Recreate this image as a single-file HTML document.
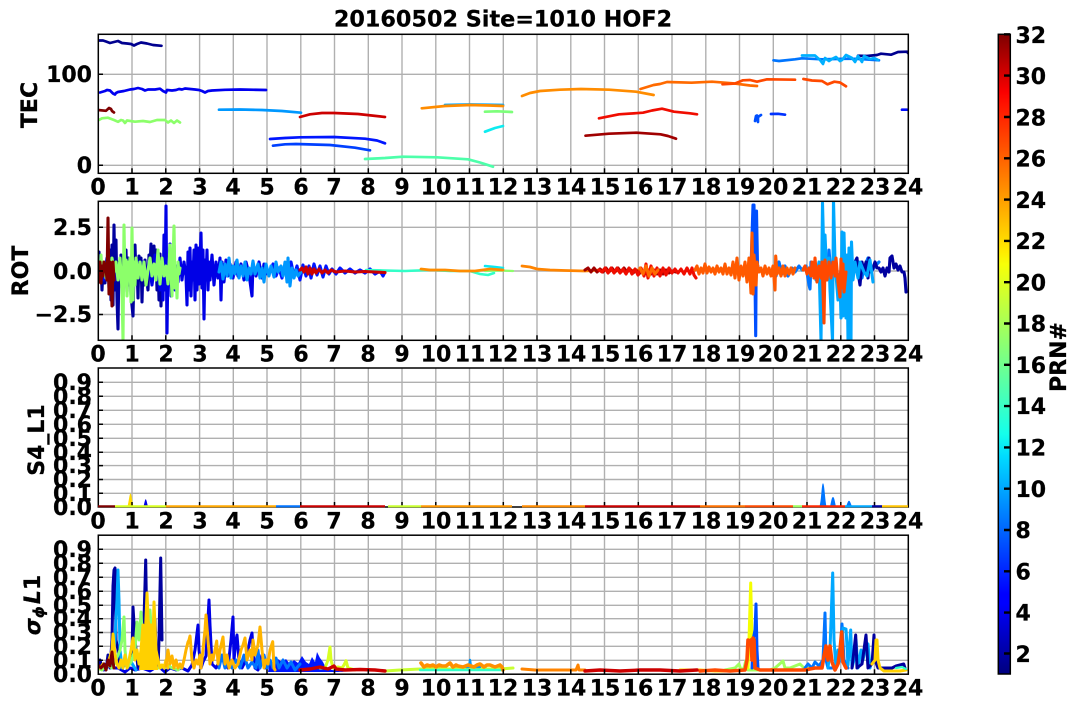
<!DOCTYPE html>
<html><head><meta charset="utf-8"><style>
html,body{margin:0;padding:0;background:#fff}
svg{display:block}
text{font-family:"DejaVu Sans","Liberation Sans",sans-serif;font-weight:bold;fill:#000;stroke:#000;stroke-width:.25px}
.x text{font-size:22px;text-anchor:middle}
.y text{font-size:22px;text-anchor:end}
.l{fill:none;stroke-linejoin:round;stroke-linecap:round}
#p1 polyline{stroke-width:2.7px}
#p2 polyline{stroke-width:3.1px}
#p4 polyline{stroke-width:3px}
</style></head><body>
<svg width="1077" height="709" viewBox="0 0 1077 709" xmlns="http://www.w3.org/2000/svg">
<defs>
<filter id="b" x="-2%" y="-5%" width="104%" height="110%"><feGaussianBlur stdDeviation=".3"/></filter>
<linearGradient id="jet" x1="0" y1="1" x2="0" y2="0">
<stop offset="0" stop-color="#00007f"/><stop offset=".11" stop-color="#0000ff"/><stop offset=".125" stop-color="#0000ff"/><stop offset=".34" stop-color="#00dbff"/><stop offset=".375" stop-color="#14ffeb"/><stop offset=".64" stop-color="#f7ff08"/><stop offset=".66" stop-color="#ffeb00"/><stop offset=".89" stop-color="#ff1300"/><stop offset=".91" stop-color="#fa0000"/><stop offset="1" stop-color="#7f0000"/>
</linearGradient>
<clipPath id="c1"><rect x="98" y="34" width="810" height="139.5"/></clipPath>
<clipPath id="c2"><rect x="98" y="201" width="810" height="139.5"/></clipPath>
<clipPath id="c3"><rect x="98" y="368" width="810" height="139"/></clipPath>
<clipPath id="c4"><rect x="98" y="535" width="810" height="139.5"/></clipPath>
<path id="gv" d="M132 0V139M165.8 0V139M199.6 0V139M233.3 0V139M267 0V139M300.8 0V139M334.5 0V139M368.3 0V139M402 0V139M435.8 0V139M469.5 0V139M503.3 0V139M537 0V139M570.8 0V139M604.5 0V139M638.3 0V139M672 0V139M705.8 0V139M739.5 0V139M773.3 0V139M807 0V139M840.8 0V139M874.5 0V139" fill="none" stroke="#b0b0b0" stroke-width="1.4"/>
<path id="tx" d="M132 139v-5M165.8 139v-5M199.6 139v-5M233.3 139v-5M267 139v-5M300.8 139v-5M334.5 139v-5M368.3 139v-5M402 139v-5M435.8 139v-5M469.5 139v-5M503.3 139v-5M537 139v-5M570.8 139v-5M604.5 139v-5M638.3 139v-5M672 139v-5M705.8 139v-5M739.5 139v-5M773.3 139v-5M807 139v-5M840.8 139v-5M874.5 139v-5" fill="none" stroke="#000" stroke-width="1.5"/>
</defs>
<rect width="1077" height="709" fill="#fff"/>
<text x="503" y="26.5" font-size="22.3" text-anchor="middle">20160502 Site=1010 HOF2</text>

<!-- grids -->
<use href="#gv" y="34.3"/><use href="#gv" y="201.3"/><use href="#gv" y="368"/><use href="#gv" y="535.2"/>
<path fill="none" stroke="#b0b0b0" stroke-width="1.4" d="M98 74.3H908M98 165.3H908M98 227.3H908M98 271H908M98 314.5H908
M98 382.3H908M98 396.3H908M98 410.3H908M98 424.3H908M98 438.3H908M98 452.3H908M98 465.6H908M98 479.5H908M98 493.3H908
M98 549.3H908M98 563.3H908M98 577.3H908M98 591.3H908M98 605.3H908M98 618.7H908M98 632.5H908M98 646.3H908M98 660.3H908"/>

<!-- panel 1 TEC -->
<g id="p1" clip-path="url(#c1)" filter="url(#b)">
<polyline class="l" stroke="#00008f" points="98,40.5 103,40.5 106,41.5 110,43 114,42 118,41 122,43 127,43.5 131,44 134,45.5 137,44 141,42.5 147,43.5 153,45 161.5,45.8"/>
<polyline class="l" stroke="#0000f0" points="100,92.5 105,91 107,90 110,90.5 113,93.5 115,94.5 116,93 118,92 124,91 130,89.5 134,89 138,88 142,89 145,90.5 148,89.5 155,89.5 160,88.7 163,91 166,92.5 167,90 172,90.5 176,90 179,89 182,89.5 185,88.5 190,89 195,89.5 199,90 202,91 205,92.5 208,91 212,90.5 225,89.8 240,89.5 266,90"/>
<polyline class="l" stroke="#0014ff" points="270,139 285,138 300,137.3 334,137 365,138.7 377,140.5 385,143.3"/>
<polyline class="l" stroke="#0040ff" points="273,145.7 285,144.3 296,144 330,145 355,147.7 370,150.3"/>
<polyline class="l" stroke="#0050ff" points="757,115.5 755,121 756,116 758,122 758,117 761,115"/>
<polyline class="l" stroke="#0030ff" points="771,114 778,113.8 785,114.7"/>
<polyline class="l" stroke="#0008ff" points="902,109.7 907,109.7"/>
<polyline class="l" stroke="#00008f" points="858,55.7 867,56 877,55 881,53.7 891,54.7 898,52 907,51.7 908,53"/>
<polyline class="l" stroke="#0074ff" points="773.5,60.3 779,61 795,59.3 802,58.3 822,59.3 835,59 850,58.7 860,59 879,60.3"/>
<polyline class="l" stroke="#0098ff" points="219,109.7 240,109.5 262,110 282,111 301,112.7"/>
<polyline class="l" stroke="#00a8ff" points="445,105 470,104.5 503,105"/>
<polyline class="l" stroke="#00b0ff" points="802,55.5 815,55.5 820,60 823,64 825,58 829,61 832,59 836,57 840,61 842,60 846,55 852,58 855,62 858,56 862,62 864,56 870,59 874,58 878,60"/>
<polyline class="l" stroke="#10ecf0" points="485,131.7 495,128 503,126"/>
<polyline class="l" stroke="#4dffaa" points="365,159 385,158 403,156.7 437,157.3 468,159.3 480,162.5 493,166.7"/>
<polyline class="l" stroke="#7dff7a" points="485,111.7 497,111.3 512,112"/>
<polyline class="l" stroke="#8cff6b" points="98,120.5 102,118.3 108,117.7 114,120 118,121.8 121,120 123,120.5 125,123 127,120.5 135,121.7 143,121 150,122 157,120 165,120 168,122.5 171,120.5 174,123 177,120.5 180,122.5"/>
<polyline class="l" stroke="#ff8c00" points="421.8,108.3 445,106 470,105 490,105.5 503,106"/>
<polyline class="l" stroke="#ff8c00" points="522,96 530,93 540,91 560,89.7 581,89 609,89.7 636,91.7 653.6,95"/>
<polyline class="l" stroke="#ff6a00" points="640.5,89 653.6,85 660,84 667,82 691.5,82.7 712,81.7 733,83.3 750,85.5 757,86"/>
<polyline class="l" stroke="#ff4a00" points="722.5,84.3 735,83.5 743,80.3 750,80 757,81.7 767,79.3 795,79.7"/>
<polyline class="l" stroke="#ff4a00" points="803.4,79 812,80.5 822,81 827.5,84.3 834.4,81.7 840,82.5 846,86.3"/>
<polyline class="l" stroke="#f00a00" points="599,118.3 619,114.3 643,112.7 652,110.5 662,108.7 674,111.7 690,113.3 697,114.3"/>
<polyline class="l" stroke="#cc0000" points="300,117 310,114.3 322,113 334,113 358,114 385,117"/>
<polyline class="l" stroke="#a00000" points="585.5,135.7 609,133.7 636.4,132.7 660.5,134.3 668,136 676,138.7"/>
<polyline class="l" stroke="#7f0000" points="98,110 106,110.8 109,108 111,109 112,111 114,112.5"/>
</g>

<!-- panel 2 ROT -->
<g id="p2" clip-path="url(#c2)" filter="url(#b)">
<polyline class="l" stroke="#00009f" points="98,271 99,252 100,280 101,262 102,290 103,268 105,283 106,262 107,272 108,258 109,288 110,250 111,300 112,245 113,305 114,225 115,290 116,240 117,300 118,329 119,262 120,280 121,255 122,288 124,260 125,282 126,250 127,292 128,258 129,285 130,262 131,295 133,316 134,270 135,245 136,280 137,262 138,298 139,256 140,280 141,258 142,302 143,264 144,285 145,260 146,274 148,290 149,255 150,268 151,244 152,284 153,266 154,246 155,274 156,250 157,290 158,262 159,300 160,254 161,306 162,262"/>
<polyline class="l" stroke="#0000e6" points="101,268 104,280 107,258 110,284 113,262 116,280 119,265 122,285 125,258 128,282 131,262 134,280 137,260 140,275 143,262 146,280 149,262 152,285 155,255 158,278 160,290 162,265 163,300 164,235 165,290 166,206 167,333 168,260 169,268 170,244 171,296 172,262 173,276 174,245 175,290 176,266 178,282 180,258 182,280 184,262 186,276 187,305 188,252 189,290 190,248 191,296 192,262 193,280 194,250 195,300 196,245 197,290 198,248 199,284 200,262 201,233 202,288 203,250 204,319 205,260 206,280 207,250 208,290 209,262 210,280 212,255 214,285 216,262 218,278 220,258 221,300 222,262 224,282 226,260 228,276 230,264 233,278 236,262 238,276 241,264 244,280 246,262 249,274 252,296 253,264 256,276 259,262 262,278 264,264 266,274"/>
<polyline class="l" stroke="#0014ff" points="270,272 273,264 276,276 279,268 282,278 285,266 288,275 291,262 294,276 297,266 300,280 303,265 306,276 309,266 311,278 314,264 317,275 320,266 323,277 326,266 329,274 332,269 336,274 340,268 345,273 350,269 355,273 360,270 365,273 370,269 375,274 380,271 383,276 385,272"/>
<polyline class="l" stroke="#0098ff" points="219,272 221,262 223,279 225,264 227,276 229,258 231,278 233,266 235,274 237,260 239,278 241,266 243,276 245,262 247,280 249,268 251,274 253,261 255,274 258,264 260,278 262,268 264,282 266,264 269,276 271,266 274,277 276,262 278,272 281,266 283,276 285,262 287,282 288,258 290,286 292,268 294,278 296,270 298,276 301,272"/>
<polyline class="l" stroke="#30ffc8" style="stroke-width:2.6px" points="366,270 385,270.5 405,271 430,270 450,271 470,271 480,274 488,275 494,273"/>
<polyline class="l" stroke="#10e8f0" style="stroke-width:2.6px" points="485,266 495,267 503,268"/>
<polyline class="l" stroke="#8cff6b" points="98,265 100,280 101,255 102,275 104,262 106,278 108,268 110,280 112,258 114,272 116,262 118,280 120,258 122,290 123,340 124,225 125,285 126,260 127,296 128,262 129,278 130,258 131,302 132,228 133,300 134,262 135,285 136,258 138,278 140,262 142,280 144,262 146,285 148,270 150,258 152,276 154,264 156,280 158,250 160,284 162,258 164,276 166,266 168,284 170,245 172,296 173,262 174,226 175,288 176,270 177,298 178,262 179,274 180,268"/>
<polyline class="l" stroke="#8cff6b" style="stroke-width:2.2px" points="485,271 500,270.5 513,271"/>
<polyline class="l" stroke="#ff8c00" style="stroke-width:2.8px" points="421,269 430,270 445,270 460,271 475,271 490,269 503,270"/>
<polyline class="l" stroke="#ff8400" style="stroke-width:2.8px" points="522,266 530,267 537,269 550,270 565,270.5 585,271 600,270 620,271 640,270"/>
<polyline class="l" stroke="#a00000" points="585,270 588,268 591,272 594,268 597,272 600,269 603,272 606,268 609,272 612,268 615,272 618,268 621,272 624,268 627,272 630,269 633,273 636,270 639,274 642,270 645,274 648,270 651,274 654,270 657,274 660,270 663,274 666,270 669,273 672,271 676,272"/>
<polyline class="l" stroke="#f00a00" points="599,270 602,272 605,268 608,273 611,268 614,273 617,268 620,273 623,269 626,274 629,268 632,274 635,269 638,275 641,268 644,276 646,264 648,278 651,266 654,276 657,268 660,276 663,268 666,275 669,268 672,273 675,269 678,273 681,269 684,274 687,268 690,274 692,268 694,275 696,278"/>
<polyline class="l" stroke="#ff6a00" points="640,268 643,274 646,266 649,276 652,268 655,274 658,270"/>
<polyline class="l" stroke="#0050ff" points="748,270 751,268 753,205 754,205 755,280 755.7,335.7 756.5,211 757.5,265 759,270"/>
<polyline class="l" stroke="#0074ff" points="773.5,272 776,276 779,262 782,274 785,266 788,276 792,268 795,272 799,266 802,270 806,266 809,285 810,289 811,262 814,275 817,268 821,282 824,264 827,280 829,250 832,288 834,262 838,280 842,268 846,276 850,262 854,272 858,262 862,278 864,268 868,258 871,272 875,266 879,262"/>
<polyline class="l" stroke="#00009f" points="855,262 857,258 858,272 860,285 862,262 864,272 866,262 868,278 869,258 871,272 873,268 875,262 877,268 879,268 881,272 883,268 885,276 887,268 889,272 890,258 892,256 894,268 896,264 898,270 900,266 902,272 904,272 905,278 906,292"/>
<polyline class="l" stroke="#00a8ff" points="802,270 806,268 810,275 813,268 816,280 819,262 821,340 822.5,203 824,262 825,235 827,280 829,258 830,290 832.5,340 833.5,201 835,262 838,300 840,280 841,318 842,232 843,316 844,233 846,318 847,255 848,340 849,248 851,340 851.5,242 853,280 855,262 858,278 860,262 864,272 867,276 870,260 873,282"/>
<polyline class="l" stroke="#ff5a00" points="695,270 697,266 699,274 701,268 703,273 705,264 707,273 709,267 711,272 713,268 715,274 717,266 719,272 721,268 723,274 725,264 727,274 729,268 731,275 733,262 735,278 737,258 739,280 741,266 743,276 745,262 747,282 749,258 751,293 752,233 753,294 754,255 756,285 757,262 759,272 761,268 763,276 765,266 767,274 769,268 771,276 773,266 775,290 775.7,256 777,274 779,268 781,276 783,266 785,276 787,268 789,274 791,268 793,274 795,268"/>
<polyline class="l" stroke="#ff4a00" points="803,270 805,266 807,274 809,268 811,276 812,262 814,278 815,258 817,282 819,266 821,278 822,262 823,290 824,323 825,260 827,280 829,262 831,278 833,262 835,276 836,258 838,282 840,297 841,259 842,288 843,264 844,292 846,272"/>
<polyline class="l" stroke="#cc0000" points="300,270 302,268 304,272 306,267 308,274 310,268 312,274 314,269 316,273 319,269 322,273 325,270 328,273 331,270 336,272 345,271 355,272 365,271.5 375,272 385,272.5"/>
<polyline class="l" stroke="#7f0000" points="98,270 99,282 100,262 101,283 102,266 103,276 104,262 105,270 106,268 107,280 108,218 109,294 110,262 111,272 112,306 113,262 114,280"/>
</g>

<!-- axes frames (panel 3 base drawn after) -->
<g clip-path="url(#c3)" fill="none" filter="url(#b)">
<path d="M127.5 506.5C129 501 129.5 493.5 130.5 493.5C131.5 493.5 132 501 133.5 506.5Z" fill="#ffd800"/>
<path d="M143.5 506.5C144.5 503 145 499.3 145.7 499.3C146.4 499.3 147 503 148 506.5Z" fill="#0000e6"/>
<path d="M819.5 506.5C821.5 500 821.5 483.3 823 483.3C824.5 483.3 825 500 826.5 506.5Z" fill="#0074ff"/>
<path d="M830 506.5C831 503 831.5 497 833 497C834.5 497 835 503 836 506.5Z" fill="#0074ff"/>
<path d="M846 506.5C847 504 848 500.7 849 500.7C850 500.7 851 504 852 506.5Z" fill="#0074ff"/>
</g>

<!-- panel 4 sigma -->
<g id="p4" clip-path="url(#c4)" filter="url(#b)">
<polygon fill="#0018ff" points="268,672 270,660 275,664 278,659 282,662 286,659 290,664 294,660 298,663 302,656 306,662 309,664 312,657 315,662 317,652 320,658 323,662 326,668 332,670 345,672"/>
<polyline class="l" stroke="#00009f" points="98,668 100,660 102,668 104,664 106,670 108,655 110,668 112,640 113,586 114,570 115,568 116,640 118,650 120,668 124,664 128,666 132,655 133,607 135,640 138,668 142,650 144,620 145.7,560 147,640 149,665 152,655 155,620 156,650 158,668 159,640 160,590 160.7,558 162,640"/>
<polyline class="l" stroke="#0000e6" points="100,668 104,670 110,664 114,668 118,668 125,672 130,668 135,670 142,668 150,671 158,666 165,672 170,668 176,670 182,668 188,671 192,665 195,650 198,625 199,650 201,668 203,662 206,656 209,600 210,625 212,664 216,668 220,660 224,655 228,668 231,640 233,617 234,660 236,640 237,635 239,660 242,668 246,660 250,640 252,633 253,650 255,668 258,670 262,655 265,668 268,660"/>
<polyline class="l" stroke="#0074ff" points="219,668 222,655 225,668 228,660 232,668 236,660 240,668 244,655 248,668 252,662 256,668 258,650 260,668 264,655 267,668 270,660 273,668 276,658 279,668 283,660 287,668 291,662 295,670 300,664"/>
<polyline class="l" stroke="#00a8ff" points="112,668 115,640 117,600 118,570 119,600 120,650 122,668 130,660 136,670"/>
<polyline class="l" stroke="#8cff6b" points="98,668 102,670 108,665 112,668 116,660 120,650 122,640 124,617 125,650 127,668 131,662 135,650 137,622 139,640 141,612 143,650 146,640 148,620 150,610 152,640 154,660 156,668 160,668 166,664 172,668 178,670 180,668"/>
<polygon fill="#ffd000" points="139,670 141,650 143,625 145,640 147,593 149,620 151,625 153,625 154,602 156,640 158,670"/>
<polyline class="l" stroke="#ffd000" points="100,668 103,664 106,668 109,660 112,650 113,634 115,655 117,664 119,668 121,660 123,668 125,655 127,668 129,660 131,650 133,638 135,660 137,650 139,664 141,650 143,625 145,645 147,593 149,640 151,625 153,640 154,602 156,650 158,660 160,668 162,665 164,668 166,660 168,668"/>
<polyline class="l" stroke="#ffb400" points="166,666 168,650 170,664 172,656 174,668 176,660 178,668 180,664 182,668 184,660 186,650 188,642 189,640 190,636 192,660 194,668 196,660 198,664 200,655 201,668 203,650 205,630 206,615 208,640 210,664 212,655 213,660 215,650 216.7,641 218,664 220,650 223,637 225,664 227,655 229,668 232,660 235,668 238,664 241,650 243,645 245,638 247,660 250,650 252,660 253,640 255,655 258,645 260,627 262,650 264,668 266,660 268,664 270,650 272.7,641.7 274,668 275,670"/>
<polyline class="l" stroke="#d8ff20" points="320,668 325,668 328,660 330,647 331,660 333,668 338,667 342,668 344,665 346,660.7 348,668 355,670"/>
<polyline class="l" stroke="#c8ff30" points="385,671 400,670 420,669 440,669 470,669 500,669 513,668"/>
<polyline class="l" stroke="#30ffc8" style="stroke-width:2.4px" points="420,670 450,670 475,670 503,670"/>
<polyline class="l" stroke="#0098ff" style="stroke-width:2.4px" points="466,667 469,667 470,660 471,667 480,667"/>
<polyline class="l" stroke="#ff9000" style="stroke-width:3.6px" points="421,663 424,667 427,665 430,666 433,665 436,667 439,665 442,666 446,666 450,663 453,667 456,665 458,666 463,667 468,665 471,666 474,667 477,665 480,664 484,667 487,665 490,665 495,667 500,665 502,667 503,670"/>
<polyline class="l" stroke="#ff8400" points="522,669 535,670 550,670 565,670 576,670 578,665 579,670 585,670"/>
<polyline class="l" stroke="#ffd000" points="680,670 700,670 715,671 730,671"/>
<polyline class="l" stroke="#a0ff60" points="725,670 735,668 739,664 741,670 744,668 745.7,661 748,670 760,670 770,670 775,668 783,661 785,668 790,668 795,666 800,664 804,668 810,668"/>
<polyline class="l" stroke="#f5ff00" points="748,668 749,640 750.7,583 752,640 754,668"/>
<polyline class="l" stroke="#0050ff" points="752,668 753,640 755,630 756,604 757,650 758,668"/>
<polyline class="l" stroke="#0074ff" points="805,668 808,664 812,668 815,662 819,666 823,660 825,613 826,660 828,668 836,668 840,660 842,624 844,660 848,668"/>
<polyline class="l" stroke="#00a8ff" points="828,668 830,650 832.7,573 834,640 836,668 838,650 840,660 843,628 846,629 848,665 850.7,630 852,668 854,660 856,640 858,668 861,650 863,660 866,645 868,644 870,668 872,660"/>
<polyline class="l" stroke="#00009f" points="852,668 855.7,635 857,668 862,664 866,635 868,668 872,664 874,635 875,660 878,668 884,668 892,668 896,666 903.7,664 905,668"/>
<polyline class="l" stroke="#ffd000" points="872,664 875,660 876,640 877,640 878,660 880,668 884,671 892,671 900,671 906,670"/>
<polyline class="l" stroke="#30ffc8" style="stroke-width:2.2px" points="896,668 902,667 906,669"/>
<polyline class="l" stroke="#ff4a00" style="stroke-width:3.6px" points="700,671 715,670 730,671 745,670 747,660 748,640 750,642 751,640 752,660 753,638 754,640 755,668 760,670 775,670 790,670 805,670 815,668 822,668 824,656 826,646 828,660 830,646 832,662 835,670 838,664 840,650 841.7,632 843,662 846,668"/>
<polyline class="l" stroke="#cc0000" style="stroke-width:3.4px" points="300,670 310,669 320,667 328,669 334,666 336,669 345,670 360,669.5 375,670 385,671"/>
<polyline class="l" stroke="#cc0000" style="stroke-width:3.4px" points="585,671 600,670 620,671 640,670 660,670 680,671 697,670"/>
<polyline class="l" stroke="#7f0000" points="98,665 101,668 104,664 106,670 108,660 110,666 112,652 113,662 114,668"/>
</g>

<!-- axes frames -->
<g fill="none" stroke="#000" stroke-width="1.5">
<rect x="98.3" y="34.3" width="810" height="139"/>
<rect x="98.3" y="201.3" width="810" height="139"/>
<rect x="98.3" y="368" width="810" height="139"/>
<rect x="98.3" y="535.2" width="810" height="139"/>
<path d="M98 74.3h5M98 165.3h5M98 227.3h5M98 271h5M98 314.5h5M98 382.3h5M98 396.3h5M98 410.3h5M98 424.3h5M98 438.3h5M98 452.3h5M98 465.6h5M98 479.5h5M98 493.3h5M98 549.3h5M98 563.3h5M98 577.3h5M98 591.3h5M98 605.3h5M98 618.7h5M98 632.5h5M98 646.3h5M98 660.3h5"/>
</g>
<use href="#tx" y="34.3"/><use href="#tx" y="201.3"/><use href="#tx" y="368"/><use href="#tx" y="535.2"/>

<!-- S4 coloured base on top of frame -->
<g fill="none" stroke-width="2.2">
<path stroke="#7f0000" d="M98 506.3H115"/><path stroke="#d8ff20" d="M115 506.3H166"/><path stroke="#ffa800" d="M166 506.3H276"/><path stroke="#0074ff" d="M276 506.3H300"/><path stroke="#cc0000" d="M300 506.3H385"/><path stroke="#c8ff30" d="M388 506.3H421"/><path stroke="#ff9800" d="M421 506.3H512"/><path stroke="#ff8c00" d="M522 506.3H585"/><path stroke="#cc0000" d="M585 506.3H700"/><path stroke="#ff7000" d="M700 506.3H745"/><path stroke="#ff4a00" d="M745 506.3H793"/><path stroke="#a0ff60" d="M793 506.3H802"/><path stroke="#ff2800" d="M802 506.3H845"/><path stroke="#00a8ff" d="M845 506.3H872"/><path stroke="#00009f" d="M872 506.3H882"/><path stroke="#ffc400" d="M882 506.3H908"/>
</g>

<!-- x labels -->
<g class="x" transform="translate(0,-.5)">
<text x="98" y="195">0</text><text x="132" y="195">1</text><text x="166" y="195">2</text><text x="200" y="195">3</text><text x="233" y="195">4</text><text x="267" y="195">5</text><text x="301" y="195">6</text><text x="334" y="195">7</text><text x="368" y="195">8</text><text x="402" y="195">9</text><text x="436" y="195">10</text><text x="470" y="195">11</text><text x="503" y="195">12</text><text x="537" y="195">13</text><text x="571" y="195">14</text><text x="605" y="195">15</text><text x="638" y="195">16</text><text x="672" y="195">17</text><text x="706" y="195">18</text><text x="740" y="195">19</text><text x="773" y="195">20</text><text x="807" y="195">21</text><text x="841" y="195">22</text><text x="875" y="195">23</text><text x="908" y="195">24</text>
<text x="98" y="362">0</text><text x="132" y="362">1</text><text x="166" y="362">2</text><text x="200" y="362">3</text><text x="233" y="362">4</text><text x="267" y="362">5</text><text x="301" y="362">6</text><text x="334" y="362">7</text><text x="368" y="362">8</text><text x="402" y="362">9</text><text x="436" y="362">10</text><text x="470" y="362">11</text><text x="503" y="362">12</text><text x="537" y="362">13</text><text x="571" y="362">14</text><text x="605" y="362">15</text><text x="638" y="362">16</text><text x="672" y="362">17</text><text x="706" y="362">18</text><text x="740" y="362">19</text><text x="773" y="362">20</text><text x="807" y="362">21</text><text x="841" y="362">22</text><text x="875" y="362">23</text><text x="908" y="362">24</text>
<text x="98" y="529">0</text><text x="132" y="529">1</text><text x="166" y="529">2</text><text x="200" y="529">3</text><text x="233" y="529">4</text><text x="267" y="529">5</text><text x="301" y="529">6</text><text x="334" y="529">7</text><text x="368" y="529">8</text><text x="402" y="529">9</text><text x="436" y="529">10</text><text x="470" y="529">11</text><text x="503" y="529">12</text><text x="537" y="529">13</text><text x="571" y="529">14</text><text x="605" y="529">15</text><text x="638" y="529">16</text><text x="672" y="529">17</text><text x="706" y="529">18</text><text x="740" y="529">19</text><text x="773" y="529">20</text><text x="807" y="529">21</text><text x="841" y="529">22</text><text x="875" y="529">23</text><text x="908" y="529">24</text>
<text x="98" y="696">0</text><text x="132" y="696">1</text><text x="166" y="696">2</text><text x="200" y="696">3</text><text x="233" y="696">4</text><text x="267" y="696">5</text><text x="301" y="696">6</text><text x="334" y="696">7</text><text x="368" y="696">8</text><text x="402" y="696">9</text><text x="436" y="696">10</text><text x="470" y="696">11</text><text x="503" y="696">12</text><text x="537" y="696">13</text><text x="571" y="696">14</text><text x="605" y="696">15</text><text x="638" y="696">16</text><text x="672" y="696">17</text><text x="706" y="696">18</text><text x="740" y="696">19</text><text x="773" y="696">20</text><text x="807" y="696">21</text><text x="841" y="696">22</text><text x="875" y="696">23</text><text x="908" y="696">24</text>
</g>

<!-- y labels -->
<g class="y">
<text x="92" y="82">100</text><text x="92" y="173">0</text>
<text x="92" y="235">2.5</text><text x="92" y="279">0.0</text><text x="92" y="322">−2.5</text>
<text x="92" y="390">0.9</text><text x="92" y="404">0.8</text><text x="92" y="418">0.7</text><text x="92" y="432">0.6</text><text x="92" y="446">0.5</text><text x="92" y="460">0.4</text><text x="92" y="473">0.3</text><text x="92" y="487">0.2</text><text x="92" y="501">0.1</text><text x="92" y="515">0.0</text>
<text x="92" y="557">0.9</text><text x="92" y="571">0.8</text><text x="92" y="585">0.7</text><text x="92" y="599">0.6</text><text x="92" y="613">0.5</text><text x="92" y="626">0.4</text><text x="92" y="640">0.3</text><text x="92" y="654">0.2</text><text x="92" y="668">0.1</text><text x="92" y="682">0.0</text>
</g>

<!-- axis titles -->
<text transform="translate(37,105) rotate(-90)" font-size="22" text-anchor="middle">TEC</text>
<text transform="translate(28,271) rotate(-90)" font-size="22" text-anchor="middle">ROT</text>
<text transform="translate(44,440) rotate(-90)" font-size="22" text-anchor="middle">S4_L1</text>
<text transform="translate(40,605) rotate(-90)" font-size="22" text-anchor="middle"><tspan font-style="italic">σ</tspan><tspan font-style="italic" font-size="15" dy="4">ϕ</tspan><tspan font-style="italic" dy="-4" dx="2">L</tspan><tspan>1</tspan></text>

<!-- colorbar -->
<rect x="998.3" y="34.3" width="12" height="639.7" fill="url(#jet)" stroke="#000" stroke-width="1.5"/>
<path fill="none" stroke="#000" stroke-width="2.4" d="M1004 34.3h6M1004 75.6h6M1004 117h6M1004 158.3h6M1004 199.6h6M1004 240.9h6M1004 282.2h6M1004 323.5h6M1004 364.8h6M1004 406.1h6M1004 447.4h6M1004 488.7h6M1004 530h6M1004 571.3h6M1004 612.6h6M1004 653.5h6"/>
<g font-size="22">
<text x="1015.5" y="43">32</text><text x="1015.5" y="84">30</text><text x="1015.5" y="125.5">28</text><text x="1015.5" y="166.5">26</text><text x="1015.5" y="208">24</text><text x="1015.5" y="249">22</text><text x="1015.5" y="290.5">20</text><text x="1015.5" y="331.5">18</text><text x="1015.5" y="373">16</text><text x="1015.5" y="414">14</text><text x="1015.5" y="455.5">12</text><text x="1015.5" y="497">10</text><text x="1015.5" y="538">8</text><text x="1015.5" y="579.5">6</text><text x="1015.5" y="620.5">4</text><text x="1015.5" y="662">2</text>
</g>
<text transform="translate(1066,357) rotate(-90)" font-size="22" text-anchor="middle">PRN#</text>
</svg>
</body></html>
